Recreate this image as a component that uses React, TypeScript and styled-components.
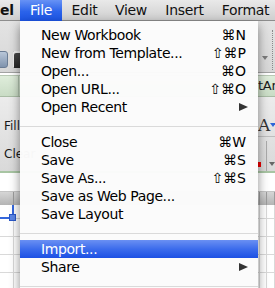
import React from 'react';
import styled, { createGlobalStyle } from 'styled-components';

const GlobalStyle = createGlobalStyle`
  html, body {
    margin: 0;
    padding: 0;
    background: #fff;
  }
  body {
    font-family: 'DejaVu Sans', 'Liberation Sans', sans-serif;
  }
`;

type MenuEntry =
  | { label: string; shortcut?: string; submenu?: boolean; active?: boolean }
  | 'sep';

const titles = [
  { label: 'el', width: 20, app: true },
  { label: 'File', width: 42, active: true },
  { label: 'Edit', width: 45 },
  { label: 'View', width: 48 },
  { label: 'Insert', width: 59 },
  { label: 'Format', width: 63 },
];

const entries: MenuEntry[] = [
  { label: 'New Workbook', shortcut: '⌘N' },
  { label: 'New from Template...', shortcut: '⇧⌘P' },
  { label: 'Open...', shortcut: '⌘O' },
  { label: 'Open URL...', shortcut: '⇧⌘O' },
  { label: 'Open Recent', submenu: true },
  'sep',
  { label: 'Close', shortcut: '⌘W' },
  { label: 'Save', shortcut: '⌘S' },
  { label: 'Save As...', shortcut: '⇧⌘S' },
  { label: 'Save as Web Page...' },
  { label: 'Save Layout' },
  'sep',
  { label: 'Import...', active: true },
  { label: 'Share', submenu: true },
  'sep',
];

const App: React.FC = () => (
  <Screen>
    <GlobalStyle />
    <MenuBar>
      {titles.map((t) => (
        <MenuTitle key={t.label} width={t.width} active={t.active} app={t.app}>
          {t.label}
        </MenuTitle>
      ))}
    </MenuBar>

    <Toolbar>
      <Side>
        <ShowIcon />
        <SaveIcon />
      </Side>
      <span />
      <Side>
        <TinyCaret />
        <DottedRule />
      </Side>
    </Toolbar>

    <TabStrip>
      <TabDivider />
      <span />
      <TabLabel>tArt</TabLabel>
    </TabStrip>

    <Ribbon>
      <RibbonLabels>
        <RibbonLabel>Fill</RibbonLabel>
        <RibbonLabel>Clear</RibbonLabel>
      </RibbonLabels>
      <span />
      <RibbonTools>
        <FontRow>
          <FontGlyph>A</FontGlyph>
          <BlueCaret />
        </FontRow>
        <ColorRow>
          <RedSwatch />
          <ColorDivider />
          <GrayCaret />
        </ColorRow>
      </RibbonTools>
    </Ribbon>

    <FormulaBar />
    <ColumnHeader>
      <HeaderCell />
      <HeaderCell />
      <HeaderCell />
      <HeaderCell />
      <HeaderCell />
    </ColumnHeader>

    {[14, 18, 18, 18, 18].map((h, row) => (
      <GridRow key={row} height={h}>
        {[0, 1, 2, 3, 4].map((col) => (
          <Cell key={col} selected={row === 0 && col === 0}>
            {row === 0 && col === 0 && <FillHandle />}
          </Cell>
        ))}
      </GridRow>
    ))}

    <Dropdown>
      {entries.map((e, i) =>
        e === 'sep' ? (
          <Separator key={i} />
        ) : (
          <Row key={i} active={e.active}>
            <span>{e.label}</span>
            {e.shortcut && <Shortcut>{e.shortcut}</Shortcut>}
            {e.submenu && <SubArrow />}
          </Row>
        )
      )}
    </Dropdown>
  </Screen>
);

const Screen = styled.div`
  position: relative;
  width: 275px;
  height: 288px;
  overflow: hidden;
  display: flex;
  flex-direction: column;
  background: #fff;
`;

const MenuBar = styled.div`
  display: flex;
  flex: none;
  height: 20px;
  background: linear-gradient(#e9e9e9, #cfcfcf);
  border-bottom: 1px solid #8d8d8d;
`;

const MenuTitle = styled.div<{ width: number; active?: boolean; app?: boolean }>`
  flex: none;
  width: ${({ width }) => width}px;
  height: 21px;
  line-height: 20px;
  font-size: 14px;
  letter-spacing: -0.3px;
  font-weight: ${({ app }) => (app ? 700 : 400)};
  text-align: ${({ app }) => (app ? 'left' : 'center')};
  color: ${({ active }) => (active ? '#fff' : '#111')};
  background: ${({ active }) =>
    active ? 'linear-gradient(#6792f5, #2b63ea 55%, #1c55e6)' : 'transparent'};
`;

const BandGrid = styled.div`
  display: grid;
  grid-template-columns: 20px 1fr 17px;
  flex: none;
`;

const Toolbar = styled(BandGrid)`
  height: 51px;
  background: linear-gradient(#e3e3e3, #d7d7d7);
  border-bottom: 1px solid #a3a3a3;
`;

const Side = styled.div`
  position: relative;
  display: flex;
  align-items: flex-end;
  gap: 5px;
  padding-bottom: 4px;
  overflow: hidden;
`;

const ShowIcon = styled.div`
  flex: none;
  width: 14px;
  height: 17px;
  margin-left: -6px;
  border-radius: 3px;
  background: linear-gradient(#b8c6d8, #7f93ad);
  border: 1px solid #6a7c94;
  box-sizing: border-box;
`;

const SaveIcon = styled.div`
  flex: none;
  width: 8px;
  height: 17px;
  background: linear-gradient(#4b4b4b, #262626);
  border-radius: 1px;
  box-shadow: inset 2px 3px 0 -1px #eee;
`;

const TinyCaret = styled.div`
  position: absolute;
  left: 4px;
  top: 35px;
  border-top: 4px solid #7a7a7a;
  border-left: 3px solid transparent;
  border-right: 3px solid transparent;
`;

const DottedRule = styled.div`
  position: absolute;
  left: 14px;
  top: 9px;
  height: 40px;
  border-left: 1px dotted #8a8a8a;
`;

const TabStrip = styled(BandGrid)`
  height: 20px;
  margin-top: 2px;
  background: linear-gradient(#dfeddb, #c9dcc5);
  border-top: 1px solid #b9c9b5;
  border-bottom: 1px solid #a9bca5;
`;

const TabDivider = styled.div`
  width: 18px;
  border-right: 1px solid #b3c5b0;
`;

const TabLabel = styled.div`
  font-size: 13px;
  line-height: 20px;
  letter-spacing: -0.3px;
  color: #1a1a1a;
  white-space: nowrap;
`;

const Ribbon = styled(BandGrid)`
  height: 74px;
  background: linear-gradient(#ececec, #d9d9d9);
  border-bottom: 2px solid #a8c5a3;
`;

const RibbonLabels = styled.div`
  display: flex;
  flex-direction: column;
  gap: 13px;
  padding: 22px 0 0 4px;
`;

const RibbonLabel = styled.div`
  font-size: 12px;
  line-height: 15px;
  color: #1a1a1a;
  white-space: nowrap;
`;

const RibbonTools = styled.div`
  display: flex;
  flex-direction: column;
  overflow: hidden;
`;

const FontRow = styled.div`
  display: flex;
  align-items: center;
  height: 22px;
  margin-top: 17px;
  border-bottom: 1px solid #bdbdbd;
`;

const FontGlyph = styled.span`
  font-family: 'DejaVu Serif', 'Liberation Serif', serif;
  font-size: 17px;
  color: #333;
  width: 11px;
`;

const BlueCaret = styled.span`
  margin-left: 1px;
  border-top: 4px solid #2f66d8;
  border-left: 3px solid transparent;
  border-right: 3px solid transparent;
`;

const ColorRow = styled.div`
  display: flex;
  align-items: center;
  height: 30px;
  margin-top: 4px;
`;

const RedSwatch = styled.span`
  width: 5px;
  height: 5px;
  margin-top: 16px;
  background: #e00;
`;

const ColorDivider = styled.span`
  align-self: stretch;
  margin-left: 5px;
  border-left: 1px solid #aaa;
`;

const GrayCaret = styled.span`
  margin: 16px 0 0 2px;
  border-top: 4px solid #666;
  border-left: 3px solid transparent;
  border-right: 3px solid transparent;
`;

const FormulaBar = styled.div`
  flex: none;
  height: 18px;
  background: #fff;
`;

const ColumnHeader = styled.div`
  display: grid;
  grid-template-columns: 14px 1fr 3px 7px 8px;
  flex: none;
  height: 13px;
  background: linear-gradient(#d6d6d6, #b4b4b4);
  border-top: 1px solid #c4c4c4;
`;

const HeaderCell = styled.div`
  border-right: 1px solid #9c9c9c;
`;

const GridRow = styled.div<{ height: number }>`
  display: grid;
  grid-template-columns: 14px 1fr 3px 7px 8px;
  flex: none;
  height: ${({ height }) => height}px;
`;

const Cell = styled.div<{ selected?: boolean }>`
  position: relative;
  box-sizing: border-box;
  border-right: ${({ selected }) => (selected ? '2px solid #3567dc' : '1px solid #d9d9d9')};
  border-bottom: ${({ selected }) => (selected ? '2px solid #3567dc' : '1px solid #d9d9d9')};
`;

const FillHandle = styled.div`
  position: absolute;
  right: -4px;
  bottom: -4px;
  width: 5px;
  height: 5px;
  background: #5b86e6;
  border: 1px solid #2a58c8;
  z-index: 1;
`;

const Dropdown = styled.div`
  position: absolute;
  top: 21px;
  left: 20px;
  width: 238px;
  padding-top: 5px;
  background: rgba(251, 251, 251, 0.98);
  box-shadow: 0 4px 10px rgba(0, 0, 0, 0.45);
  z-index: 2;
`;

const Row = styled.div<{ active?: boolean }>`
  display: flex;
  align-items: flex-start;
  justify-content: space-between;
  height: 18px;
  line-height: 18px;
  padding: 0 12px 0 21px;
  font-size: 14px;
  letter-spacing: -0.4px;
  white-space: nowrap;
  color: ${({ active }) => (active ? '#fff' : '#000')};
  background: ${({ active }) =>
    active ? 'linear-gradient(#6a90f3, #3c6cec 50%, #1c50e4)' : 'transparent'};
`;

const Shortcut = styled.span`
  letter-spacing: 0;
`;

const SubArrow = styled.span`
  margin-top: 5px;
  margin-right: -2px;
  border-left: 9px solid #333;
  border-top: 4.5px solid transparent;
  border-bottom: 4.5px solid transparent;
`;

const Separator = styled.div`
  height: 1px;
  margin: 10px 0 6px;
  background: #dadada;
`;

export default App;
